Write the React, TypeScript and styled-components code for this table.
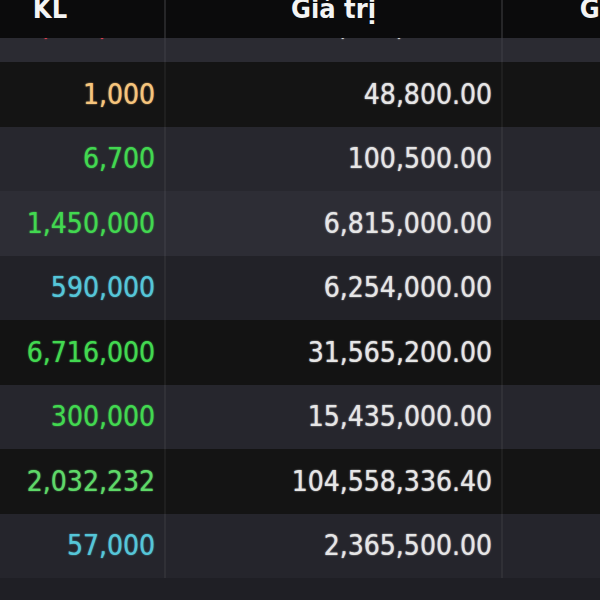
import styled, { createGlobalStyle } from 'styled-components';

const GlobalStyle = createGlobalStyle`
  html, body {
    margin: 0;
    padding: 0;
    background: #1f1f25;
    overflow: hidden;
  }
  body {
    width: 600px;
    height: 600px;
  }
`;

const Board = styled.div`
  margin-left: -64px;
  width: 900px;
  font-family: 'DejaVu Sans Condensed', 'DejaVu Sans', sans-serif;
`;

const HeaderRow = styled.div`
  display: flex;
  height: 38px;
  background: #0b0b0c;
  overflow: hidden;
`;

const HeaderCell = styled.div<{ $width: number }>`
  flex: none;
  width: ${(p) => p.$width}px;
  box-sizing: border-box;
  display: flex;
  align-items: flex-end;
  justify-content: center;
  padding-bottom: 15px;
  border-right: 2px solid #262628;
  color: #f4f4f4;
  font-size: 27px;
  font-weight: bold;
  line-height: 28px;
  white-space: nowrap;
`;

const Row = styled.div<{ $bg: string; $height: number }>`
  display: flex;
  height: ${(p) => p.$height}px;
  background: ${(p) => p.$bg};
  overflow: hidden;
`;

const Cell = styled.div<{ $width: number; $color?: string }>`
  flex: none;
  width: ${(p) => p.$width}px;
  box-sizing: border-box;
  display: flex;
  align-items: center;
  justify-content: flex-end;
  padding-right: 9px;
  border-right: 2px solid rgba(255, 255, 255, 0.05);
  color: ${(p) => p.$color || '#e6e6e6'};
  font-size: 28px;
  line-height: 28px;
  white-space: nowrap;
  text-shadow: 0 0 1.5px ${(p) => p.$color || '#e6e6e6'};
`;

// only the comma tails of the row scrolled under the header show
const Peek = styled.span`
  margin-top: -46px;
`;

const COLS = [230, 337, 276];

const rows = [
  { kl: '1,000', color: '#f6c57c', value: '48,800.00', bg: '#141414' },
  { kl: '6,700', color: '#42d850', value: '100,500.00', bg: '#27272e' },
  { kl: '1,450,000', color: '#42d850', value: '6,815,000.00', bg: '#2d2d35' },
  { kl: '590,000', color: '#55c6d8', value: '6,254,000.00', bg: '#222228' },
  { kl: '6,716,000', color: '#42d850', value: '31,565,200.00', bg: '#131313' },
  { kl: '300,000', color: '#42d850', value: '15,435,000.00', bg: '#26262d' },
  { kl: '2,032,232', color: '#5ed868', value: '104,558,336.40', bg: '#141414' },
  { kl: '57,000', color: '#55c6d8', value: '2,365,500.00', bg: '#25252c' },
];

function App() {
  return (
    <>
      <GlobalStyle />
      <Board>
        <HeaderRow>
          <HeaderCell $width={COLS[0]}>KL</HeaderCell>
          <HeaderCell $width={COLS[1]}>Giá trị</HeaderCell>
          <HeaderCell $width={COLS[2]}>Giá khớp</HeaderCell>
        </HeaderRow>

        <Row $bg="#2b2b32" $height={24}>
          <Cell $width={COLS[0]} $color="#e0404f">
            <Peek>3,150,000</Peek>
          </Cell>
          <Cell $width={COLS[1]} $color="#d2d2d2">
            <Peek>15,750,000.00</Peek>
          </Cell>
          <Cell $width={COLS[2]} />
        </Row>

        {rows.map((row, i) => (
          <Row key={row.value} $bg={row.bg} $height={i % 2 === 0 ? 65 : 64}>
            <Cell $width={COLS[0]} $color={row.color}>
              {row.kl}
            </Cell>
            <Cell $width={COLS[1]}>{row.value}</Cell>
            <Cell $width={COLS[2]} />
          </Row>
        ))}
      </Board>
    </>
  );
}

export default App;
